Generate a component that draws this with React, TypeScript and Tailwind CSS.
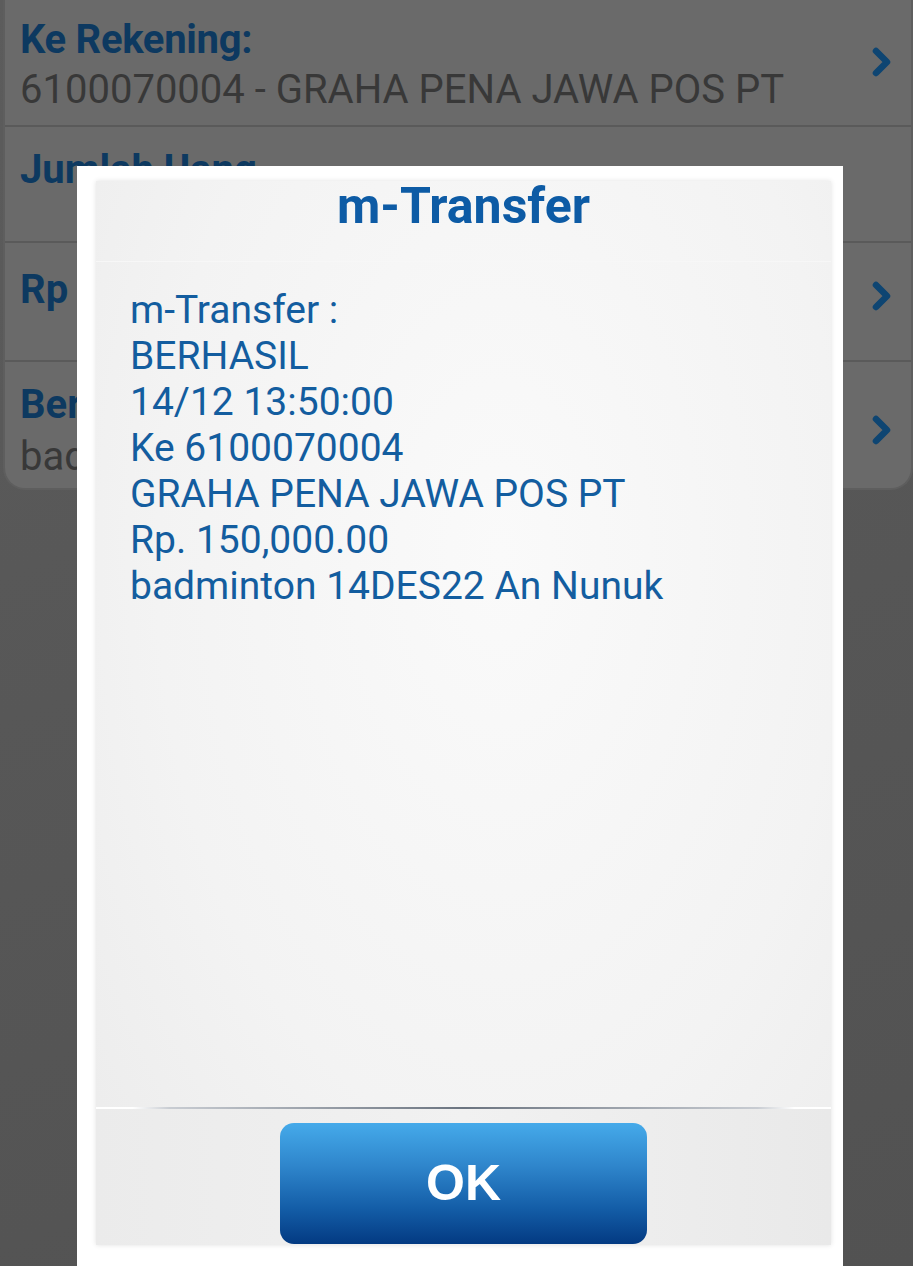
import React from "react";

const lines = [
  "m-Transfer :",
  "BERHASIL",
  "14/12 13:50:00",
  "Ke 6100070004",
  "GRAHA PENA JAWA POS PT",
  "Rp. 150,000.00",
  "badminton 14DES22 An Nunuk",
];

function Chevron({ className }: { className?: string }) {
  return (
    <svg width="26" height="32" viewBox="0 0 26 32" fill="none" className={className}>
      <path d="M7 5 L18 16 L7 27" stroke="#0e4572" strokeWidth="6.5" strokeLinecap="round" strokeLinejoin="round" />
    </svg>
  );
}

export default function App() {
  return (
    <div
      className="relative w-[913px] h-[1266px] overflow-hidden bg-[linear-gradient(160deg,#5c5c5c_0%,#575757_45%,#525252_100%)]"
      style={{ fontFamily: "Roboto, 'Noto Sans', sans-serif" }}
    >
      {/* form card behind the dialog */}
      <div className="ml-[3px] w-[910px] bg-[#6a6a6a] border-l-2 border-r-2 border-b-2 border-[#5e5e5e] rounded-b-[22px]">
        <div className="h-[127px] flex justify-between border-b-2 border-[#5a5a5a] pl-[15px] pr-[16px]">
          <div className="pt-[16px] flex flex-col">
            <span className="text-[40px] leading-[48px] font-bold text-[#0d3960] tracking-[-0.3px]">Ke Rekening:</span>
            <span className="text-[40px] leading-[52px] text-[#383838]">6100070004 - GRAHA PENA JAWA POS PT</span>
          </div>
          <Chevron className="mt-[46px]" />
        </div>
        <div className="h-[116px] flex justify-between border-b-2 border-[#5a5a5a] pl-[15px] pr-[16px]">
          <div className="pt-[19px]">
            <span className="text-[40px] leading-[48px] font-bold text-[#0d3960]">Jumlah Uang</span>
          </div>
        </div>
        <div className="h-[119px] flex justify-between border-b-2 border-[#5a5a5a] pl-[15px] pr-[16px]">
          <div className="pt-[23px]">
            <span className="text-[40px] leading-[48px] font-bold text-[#0d3960]">Rp</span>
          </div>
          <Chevron className="mt-[37px]" />
        </div>
        <div className="h-[126px] flex justify-between pl-[15px] pr-[16px]">
          <div className="pt-[19px] flex flex-col">
            <span className="text-[40px] leading-[48px] font-bold text-[#0d3960]">Berita</span>
            <span className="text-[40px] leading-[56px] text-[#383838]">badminton 14DES22 An Nunuk</span>
          </div>
          <Chevron className="mt-[52px]" />
        </div>
      </div>

      {/* dialog */}
      <div className="absolute left-[77px] top-[166px] w-[766px] h-[1120px] bg-white pt-[15px] pl-[19px] pr-[12px]">
        <div className="h-[1064px] flex flex-col shadow-[0_0_5px_rgba(0,0,0,0.12)] bg-[radial-gradient(ellipse_at_55%_35%,#fafafa_0%,#f3f3f3_60%,#ebebeb_100%)]">
          <div className="h-[81px] border-b border-[#f7f7f7] flex justify-center">
            <span className="text-[50px] leading-[50px] font-bold text-[#0d5ba5]">m-Transfer</span>
          </div>
          <div className="flex-1 pt-[25px] pl-[34px] flex flex-col">
            {lines.map((l) => (
              <span key={l} className="text-[39px] leading-[46px] text-[#135d9f]">
                {l}
              </span>
            ))}
          </div>
          <div className="h-[2px] bg-[linear-gradient(90deg,#ffffff_0%,#ffffff_5%,#c8ccd2_10%,#6b7480_50%,#c8ccd2_90%,#ffffff_95%,#ffffff_100%)]" />
          <div className="h-[136px] pt-[14px] flex justify-center bg-[linear-gradient(90deg,#ebebeb,#f1f1f1_50%,#e9e9e9)]">
            <button className="w-[367px] h-[121px] rounded-[14px] bg-[linear-gradient(180deg,#45aaea_0%,#2f86cc_35%,#145ea8_70%,#033a82_100%)] flex items-center justify-center">
              <span
                className="text-[50px] font-bold text-white"
                style={{ fontFamily: "'Liberation Sans', Arial, sans-serif" }}
              >
                OK
              </span>
            </button>
          </div>
        </div>
      </div>
    </div>
  );
}
